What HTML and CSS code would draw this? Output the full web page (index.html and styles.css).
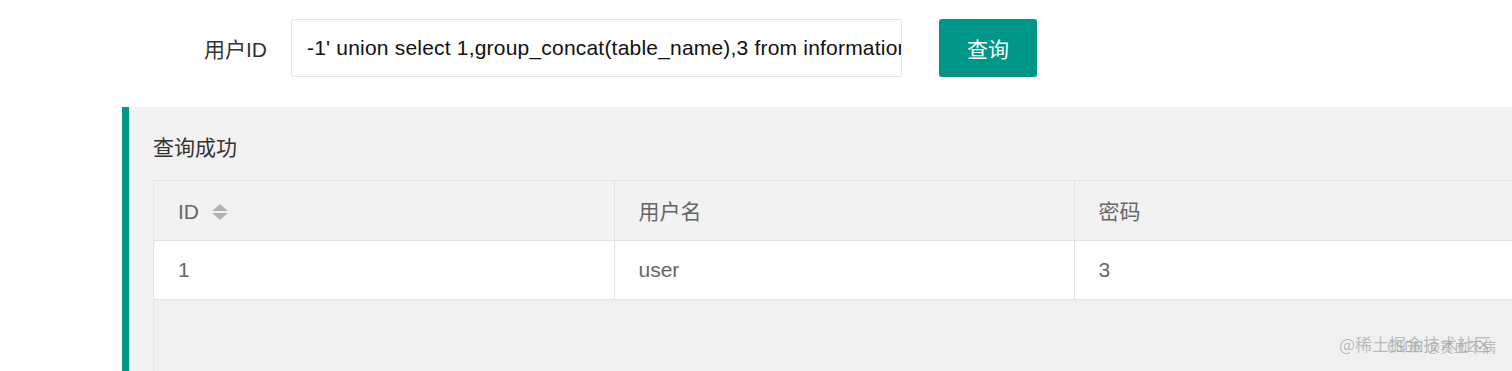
FILE: index.html
```html
<!DOCTYPE html>
<html lang="zh">
<head>
<meta charset="utf-8">
<title>查询</title>
<link rel="stylesheet" href="styles.css">
</head>
<body>
<form class="form-row">
  <label class="form-label">用户ID</label>
  <input class="form-input" type="text" value="-1' union select 1,group_concat(table_name),3 from information_schema.tables where table_schema=database()--+">
  <button class="btn" type="button">查询</button>
</form>
<section class="panel">
  <h2 class="panel-title">查询成功</h2>
  <div class="table-box">
    <table class="data-table">
      <thead>
        <tr>
          <th><span class="th-inner">ID <span class="sort"><i class="sort-up"></i><i class="sort-down"></i></span></span></th>
          <th>用户名</th>
          <th>密码</th>
        </tr>
      </thead>
      <tbody>
        <tr>
          <td>1</td>
          <td>user</td>
          <td>3</td>
        </tr>
      </tbody>
    </table>
    <div class="watermark"><span class="wm1">@稀土掘金技术社区</span><span class="wm2">CSDN @贫血不病</span></div>
  </div>
</section>
</body>
</html>
```

FILE: styles.css
```css
* { box-sizing: border-box; }
html, body {
  margin: 0;
  padding: 0;
  background: #fff;
  overflow: hidden;
  height: 371px;
}
body {
  font-family: "Liberation Sans", "Noto Sans CJK SC", sans-serif;
  font-size: 21px;
  color: #333;
}
.form-row {
  display: flex;
  align-items: center;
  margin: 0;
  padding-top: 19px;
}
.form-label {
  width: 267px;
  text-align: right;
  margin-right: 24px;
  color: #333;
  font-size: 21px;
}
.form-input {
  width: 611px;
  height: 58px;
  border: 1px solid #e6e6e6;
  border-radius: 2px;
  padding: 0 0 0 15px;
  font-family: "Liberation Sans", "Noto Sans CJK SC", sans-serif;
  font-size: 21px;
  letter-spacing: 0.2px;
  color: #111;
  background: #fff;
  outline: none;
}
.btn {
  margin-left: 37px;
  width: 98px;
  height: 58px;
  border: none;
  border-radius: 3px;
  background: #009688;
  color: #fff;
  font-family: "Noto Sans CJK SC", "Liberation Sans", sans-serif;
  font-size: 21px;
  padding: 0;
}
.panel {
  margin: 30px 0 0 122px;
  border-left: 7px solid #009688;
  background: #f2f2f2;
  padding: 24px 0 0 24px;
  height: 300px;
  overflow: hidden;
}
.panel-title {
  margin: 0 0 19px 0;
  font-weight: normal;
  font-size: 21px;
  line-height: 30px;
  color: #333;
  font-family: "Noto Sans CJK SC", "Liberation Sans", sans-serif;
}
.table-box {
  position: relative;
  width: 1390px;
  height: 300px;
  border: 1px solid #e6e6e6;
  background: #f0f0f0;
}
.data-table {
  border-collapse: collapse;
  width: 1380px;
  table-layout: fixed;
}
.data-table th,
.data-table td {
  width: 460px;
  text-align: left;
  font-weight: normal;
  padding: 0 0 0 24px;
  color: #666;
  font-size: 21px;
  border-right: 1px solid #e2e2e2;
  border-bottom: 1px solid #e2e2e2;
}
.data-table th {
  height: 59px;
  background: #f2f2f2;
  font-family: "Noto Sans CJK SC", "Liberation Sans", sans-serif;
}
.data-table td {
  height: 59px;
  background: #fff;
}
.th-inner {
  display: inline-flex;
  align-items: center;
  font-family: "Liberation Sans", sans-serif;
}
.sort {
  display: inline-flex;
  flex-direction: column;
  gap: 2px;
  margin-left: 13px;
}
.sort-up, .sort-down {
  display: block;
  width: 0;
  height: 0;
  border-left: 8px solid transparent;
  border-right: 8px solid transparent;
}
.sort-up { border-bottom: 7px solid #b2b2b2; }
.sort-down { border-top: 7px solid #b2b2b2; }
.watermark {
  position: absolute;
  left: 1185px;
  top: 150px;
  width: 170px;
  height: 30px;
  font-family: "Noto Sans CJK SC", sans-serif;
  color: rgba(150, 150, 150, 0.6);
}
.wm1 {
  position: absolute;
  left: 0;
  top: 0;
  font-size: 17px;
  white-space: nowrap;
}
.wm2 {
  position: absolute;
  left: 48px;
  top: 5px;
  font-size: 14px;
  white-space: nowrap;
}
```
